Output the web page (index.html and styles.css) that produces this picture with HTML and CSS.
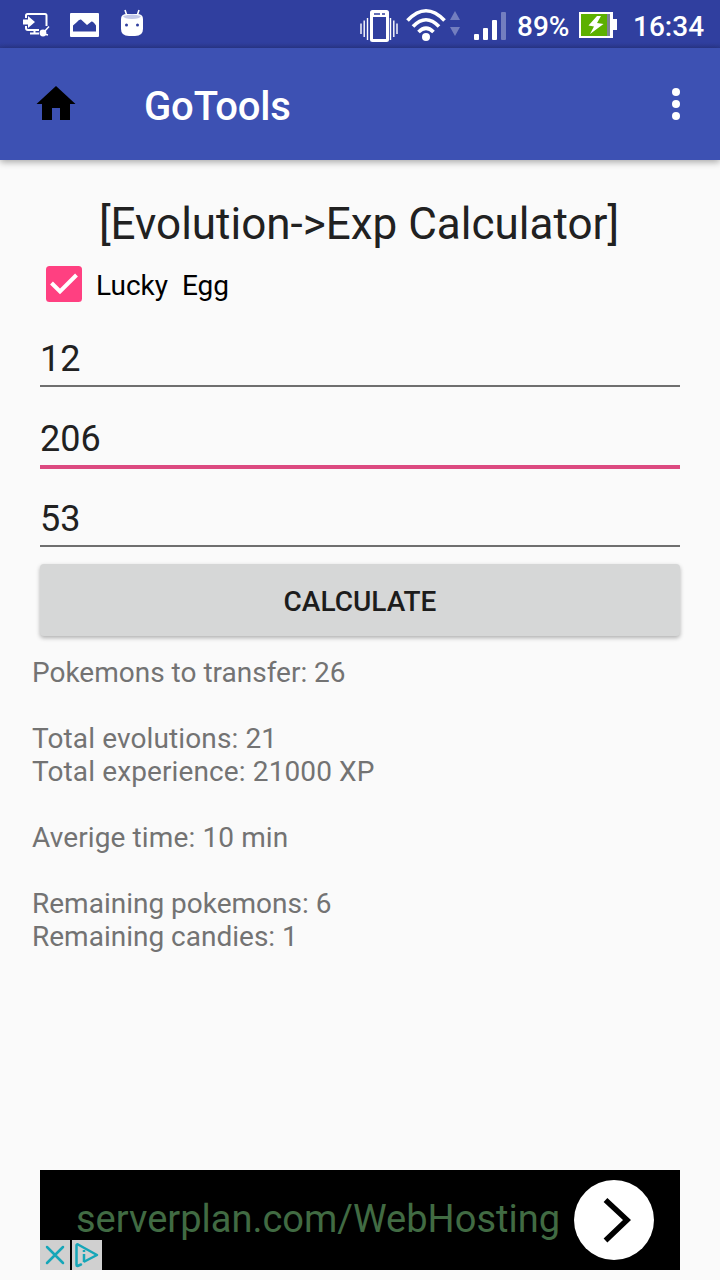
FILE: index.html
```html
<!DOCTYPE html>
<html lang="en">
<head>
  <meta charset="UTF-8" />
  <meta name="viewport" content="width=device-width, initial-scale=1.0" />
  <title>GoTools</title>
  <link rel="stylesheet" href="styles.css">
</head>
<body>
  <div class="status-bar">
    <div class="notifications">
      <svg width="28" height="26" viewBox="0 0 28 26" fill="none" stroke="#fff">
        <path d="M3 6V3.500Q3 2 4.500 2H22Q23.500 2 23.500 3.500V14M3 14V16Q3 18 5 18H16" stroke-width="2" />
        <path d="M0 7.500H5V4L12 10L5 16V12.500H0Z" fill="#fff" stroke="none" />
        <path d="M7 21.500H16M11.500 18V21" stroke-width="2" />
        <circle cx="20" cy="21" r="3.400" fill="#fff" stroke="none" />
        <path d="M21 20L26 14.500M21 22L25 23" stroke-width="1.500" />
      </svg>
      <svg class="photo" width="29" height="24" viewBox="0 0 29 24">
        <path fill="#fff" fill-rule="evenodd" d="M1 0H28Q29 0 29 1V23Q29 24 28 24H1Q0 24 0 23V1Q0 0 1 0ZM3 18.500H26V12.500Q23 8 21.500 8.500L17 12L11 6.500Q9 6 7 9L3 12.500Z" />
      </svg>
      <svg class="droid" width="24" height="28" viewBox="0 0 24 28">
        <path d="M5 1L7 7M19 1L17 7" stroke="#fff" stroke-width="1.600" />
        <path d="M1 10Q1 5 7 5H17Q23 5 23 10V20Q23 27 15 27H9Q1 27 1 20Z" fill="#fff" />
        <path d="M3 7Q12 4 21 7Q20 10 12 10Q4 10 3 7Z" fill="#c3c9e8" />
        <circle cx="6.500" cy="16" r="1.500" fill="#303f9f" />
        <circle cx="17.500" cy="16" r="1.500" fill="#303f9f" />
      </svg>
    </div>
    <div class="system">
      <svg width="38" height="34" viewBox="0 0 38 34" fill="none" stroke="#fff">
        <rect x="11.500" y="2.500" width="16" height="29" rx="1" stroke-width="3" />
        <path d="M11 5.500H28" stroke-width="5" />
        <path d="M14 5H20M22 5H25" stroke="#303f9f" stroke-width="1.500" />
        <path d="M1 14.500V25M4.200 11.500V28M7.500 9V31M30.500 9V31M33.800 11.500V28M37 14.500V25" stroke-width="1.400" />
      </svg>
      <svg class="wifi" width="40" height="34" viewBox="0 0 40 34" fill="none" stroke="#fff" stroke-width="3.700">
        <path d="M1.500 12.500Q20 -7 38.500 12.500" />
        <path d="M7 18.500Q20 5 33 18.500" />
        <path d="M12.500 24Q20 16.500 27.500 24" />
        <circle cx="20" cy="29" r="4" fill="#fff" stroke="none" />
      </svg>
      <svg class="traffic" width="10" height="26" viewBox="0 0 10 26" fill="#737ebf">
        <path d="M5 0L10 9H0ZM0 16H10L5 25Z" />
      </svg>
      <svg class="signal" width="33" height="28" viewBox="0 0 33 28" fill="#fff">
        <rect x="0" y="22" width="5" height="6" rx="1" />
        <rect x="9" y="16" width="5" height="12" rx="1" />
        <rect x="18" y="8" width="5" height="20" rx="1" />
        <rect x="27" y="0" width="5" height="28" rx="1" fill="#737ebf" />
      </svg>
      <span class="percent">89%</span>
      <svg class="battery" width="38" height="26" viewBox="0 0 38 26">
        <path d="M0 0H34V7H38V18H34V26H0Z" fill="#fff" />
        <rect x="2" y="2" width="26" height="22" fill="#5cb000" />
        <rect x="28" y="2" width="3" height="22" fill="#7c8494" />
        <path d="M18 4L9.500 13.500L15 14.500L11 22L24.500 12L18 11L22 4Z" fill="#fff" />
      </svg>
      <span class="clock">16:34</span>
    </div>
  </div>

  <header class="toolbar">
    <svg class="home" width="40" height="34" viewBox="0 0 40 34">
      <path d="M20 0L39.500 18H34V34H24V22H16V34H6V18H.5Z" />
    </svg>
    <h1>GoTools</h1>
    <svg class="more" width="8" height="32" viewBox="0 0 8 32" fill="#fff">
      <circle cx="4" cy="4" r="4" />
      <circle cx="4" cy="16" r="4" />
      <circle cx="4" cy="28" r="4" />
    </svg>
  </header>

  <main>
    <h2>[Evolution-&gt;Exp Calculator]</h2>
    <div class="lucky-egg">
      <svg width="36" height="36" viewBox="0 0 36 36">
        <rect width="36" height="36" rx="3.500" fill="#ff4081" />
        <path d="M5.500 17L14 25.500L30.500 9" fill="none" stroke="#fff" stroke-width="4" />
      </svg>
      <span>Lucky&nbsp; Egg</span>
    </div>

    <div class="field">12</div>
    <div class="field focused">206</div>
    <div class="field">53</div>

    <button class="calculate">CALCULATE</button>

    <div class="result">
      Pokemons to transfer: 26<br><br>
      <span class="totals">Total evolutions: 21<br>
      Total experience: 21000 XP<br><br>
      Averige time: 10 min</span><br><br>
      Remaining pokemons: 6<br>
      Remaining candies: 1
    </div>
  </main>

  <div class="ad">
    <span class="ad-url">serverplan.com/WebHosting</span>
    <svg class="ad-arrow" width="80" height="80" viewBox="0 0 80 80">
      <circle cx="40" cy="40" r="40" fill="#fff" />
      <path d="M31.500 20L53 40L31.500 60.500" fill="none" stroke="#000" stroke-width="5.500" />
    </svg>
    <div class="ad-badges">
      <svg width="30" height="30" viewBox="0 0 30 30">
        <path d="M7 7L23 23M23 7L7 23" stroke="#16a6b8" stroke-width="2.500" stroke-linecap="round" />
      </svg>
      <svg width="30" height="30" viewBox="0 0 30 30" fill="none" stroke="#16a6b8" stroke-width="2.500">
        <path d="M9 24.500L5.500 26Q4.500 26 4.500 25V5.500Q4.500 4 6 4.500L25 15L12.500 21.500" stroke-linejoin="round" stroke-linecap="round" />
        <path d="M12 14V22M12 10V12" />
      </svg>
    </div>
  </div>
</body>
</html>
```
FILE: styles.css
```css
* {
  box-sizing: border-box;
}

body {
  margin: 0;
  height: 1280px;
  display: flex;
  flex-direction: column;
  background-color: #fafafa;
  color: #212121;
  font-family: Roboto, sans-serif;
  overflow: hidden;
}

svg {
  display: block;
  flex: none;
}

/* Status bar */
.status-bar {
  height: 48px;
  padding: 0 16px 0 23px;
  display: flex;
  justify-content: space-between;
  background: linear-gradient(#303f9f 43px, #2b3990);
  color: #fff;
}

.notifications,
.system {
  display: flex;
  align-items: center;
}

.notifications {
  padding-top: 2px;
}

.photo {
  margin-left: 19px;
}

.droid {
  margin: -4px 0 0 21px;
}

.system {
  font-size: 28px;
  font-weight: 500;
  padding-top: 4px;
}

.wifi {
  margin: -3px 0 0 8px;
}

.traffic {
  margin: -4px 0 0 4px;
}

.signal {
  margin-left: 14px;
}

.percent {
  width: 52px;
  margin-left: 10px;
}

.battery {
  margin: -3px 0 0 10px;
}

.clock {
  width: 71px;
  margin-left: 16px;
}

/* Toolbar */
.toolbar {
  height: 112px;
  flex: none;
  padding: 0 40px 0 36px;
  display: flex;
  align-items: center;
  background-color: #3d51b3;
  color: #fff;
  box-shadow: 0 2px 7px rgba(0, 0, 0, 0.35);
}

.home {
  margin-top: -2px;
}

.toolbar h1 {
  margin: 4px 0 0 68px;
  font-size: 40px;
  font-weight: 500;
  letter-spacing: -0.15px;
}

.more {
  margin-left: auto;
}

/* Calculator */
main {
  flex: 1;
  padding: 38px 32px 0;
}

h2 {
  margin: 0 2px 0 0;
  font-size: 44px;
  line-height: 52px;
  font-weight: 400;
  text-align: center;
}

.lucky-egg {
  height: 68px;
  padding-left: 14px;
  display: flex;
  align-items: center;
  gap: 14px;
  color: #000;
  font-size: 28px;
}

.lucky-egg span {
  margin-top: 3px;
}

.field {
  height: 69px;
  margin: 0 8px 11px;
  padding-top: 20px;
  border-bottom: 2px solid #6f6f6f;
  font-size: 36px;
  line-height: 42px;
}

.field.focused {
  height: 71px;
  margin-bottom: 9px;
  border-bottom: 4px solid #dc4a80;
}

.calculate {
  display: block;
  width: 640px;
  height: 72px;
  margin: 17px 8px 0;
  padding: 2px 0 0;
  border: 0;
  border-radius: 4px;
  background-color: #d6d7d7;
  color: #1c1c1c;
  font-family: inherit;
  font-size: 28px;
  font-weight: 500;
  box-shadow: 0 2px 4px rgba(0, 0, 0, 0.3);
}

.result {
  margin-top: 20px;
  color: #737373;
  font-size: 28px;
  line-height: 33px;
}

.totals {
  letter-spacing: 0.12px;
}

/* Ad banner */
.ad {
  position: relative;
  width: 640px;
  height: 100px;
  margin: 0 40px 10px;
  padding: 0 26px 0 36px;
  display: flex;
  align-items: center;
  justify-content: space-between;
  background-color: #000;
}

.ad-url {
  margin-top: -2px;
  color: #416b43;
  font-size: 38px;
}

.ad-badges {
  position: absolute;
  left: 0;
  bottom: 0;
  display: flex;
  gap: 2px;
}

.ad-badges svg {
  background-color: #d0d0d0;
}
```
